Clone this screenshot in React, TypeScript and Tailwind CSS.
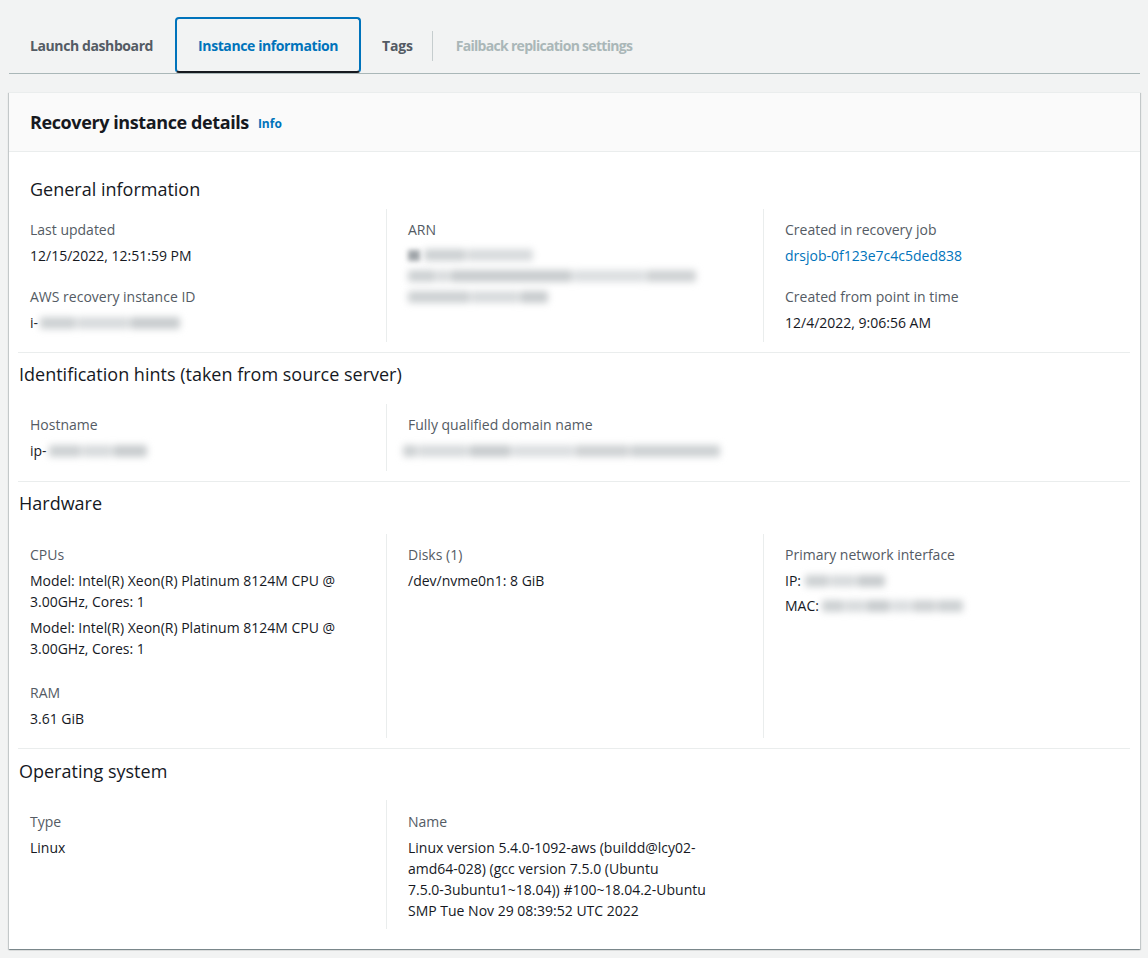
import React from "react";

const Label = ({ children }: { children: React.ReactNode }) => (
  <div className="text-[14px] leading-[20px] text-[#545b64]">{children}</div>
);

const Value = ({
  children,
  className = "mt-[5px]",
  color = "text-[#16191f]",
}: {
  children: React.ReactNode;
  className?: string;
  color?: string;
}) => <div className={"text-[14px] leading-[21px] max-w-[330px] " + color + " " + className}>{children}</div>;

const shades = ["#cdd1d3", "#d8dbdd", "#c8ccce", "#dcdfe1", "#cfd2d4"];

const Blur = ({ segs, className = "" }: { segs: number[]; className?: string }) => (
  <span className={"inline-flex items-center gap-[1px] align-middle blur-[3.5px] " + className}>
    {segs.map((w, i) => (
      <span
        key={i}
        className="inline-block h-[12px] rounded-[2px]"
        style={{ width: w, backgroundColor: shades[i % shades.length] }}
      />
    ))}
  </span>
);

const Heading = ({ children, className = "" }: { children: React.ReactNode; className?: string }) => (
  <h2 className={"text-[18px] leading-[24px] font-normal text-[#16191f] " + className}>{children}</h2>
);

const Sep = ({ className = "" }: { className?: string }) => (
  <div className={"ml-[9px] mr-[10px] h-px bg-[#eaeded] " + className} />
);

export default function App() {
  return (
    <div className="min-h-[958px] bg-[#f2f3f3] pl-[9px] pr-[8px] font-['Open_Sans',sans-serif] text-[#16191f]">
      {/* Tabs */}
      <div className="flex h-[74px] items-stretch border-b border-[#aab7b8] pt-[17px]">
        <div className="flex items-center pl-[21px] pr-[22px] text-[14px] font-bold tracking-[-0.4px] text-[#545b64]">
          Launch dashboard
        </div>
        <div className="flex items-center rounded-[4px] border-2 border-[#0073bb] border-b-[#16191f] px-[21px] text-[14px] font-bold tracking-[-0.4px] text-[#0073bb]">
          Instance information
        </div>
        <div className="flex items-center pl-[21px] pr-[19px] text-[14px] font-bold tracking-[-0.2px] text-[#545b64]">
          Tags
        </div>
        <div className="self-center mb-[-1px] h-[30px] w-px bg-[#c6cdce]" />
        <div className="flex items-center pl-[23px] text-[14px] font-bold tracking-[-0.7px] text-[#aab7b8]">
          Failback replication settings
        </div>
      </div>

      {/* Card */}
      <div className="mt-[18px] border-t border-[#eaeded] bg-white pb-[20px] shadow-[0_1px_1px_0_rgba(0,28,36,0.3),1px_1px_1px_0_rgba(0,28,36,0.15),-1px_1px_1px_0_rgba(0,28,36,0.15)]">
        <div className="flex h-[59px] items-center border-b border-[#eaeded] bg-[#fafafa] pl-[21px]">
          <h1 className="text-[18px] font-bold tracking-[-0.4px] text-[#16191f]">Recovery instance details</h1>
          <span className="ml-[9px] mt-[3px] text-[12px] font-bold text-[#0073bb]">Info</span>
        </div>

        {/* General information */}
        <Heading className="mt-[25px] pl-[21px]">General information</Heading>
        <div className="mt-[8px] grid grid-cols-3">
          <div className="pl-[21px] pr-[20px] pt-[11px] pb-[9px]">
            <Label>Last updated</Label>
            <Value>12/15/2022, 12:51:59 PM</Value>
            <div className="mt-[21px]">
              <Label>AWS recovery instance ID</Label>
              <Value>
                <span className="flex items-center">
                  i-
                  <Blur className="ml-[2px]" segs={[36, 52, 50]} />
                </span>
              </Value>
            </div>
          </div>
          <div className="border-l border-[#eaeded] pl-[21px] pr-[20px] pt-[11px] pb-[9px]">
            <Label>ARN</Label>
            <div className="mt-[5px] flex flex-col gap-[9px] pt-[4px]">
              <span className="flex items-center">
                <span className="inline-block h-[11px] w-[12px] bg-[#9fa4a8] blur-[2.5px]" />
                <Blur className="ml-[4px]" segs={[42, 66]} />
              </span>
              <Blur segs={[28, 12, 122, 72, 50]} />
              <Blur segs={[62, 48, 28]} />
            </div>
          </div>
          <div className="border-l border-[#eaeded] pl-[21px] pr-[20px] pt-[11px] pb-[9px]">
            <Label>Created in recovery job</Label>
            <Value color="text-[#0073bb]">drsjob-0f123e7c4c5ded838</Value>
            <div className="mt-[21px]">
              <Label>Created from point in time</Label>
              <Value>12/4/2022, 9:06:56 AM</Value>
            </div>
          </div>
        </div>
        <Sep className="mt-[10px]" />

        {/* Identification hints */}
        <Heading className="mt-[9px] pl-[10px]">Identification hints (taken from source server)</Heading>
        <div className="mt-[18px] grid grid-cols-3">
          <div className="pl-[21px] pr-[20px] pt-[11px] pb-[10px]">
            <Label>Hostname</Label>
            <Value>
              <span className="flex items-center">
                ip-
                <Blur className="ml-[2px]" segs={[32, 30, 34]} />
              </span>
            </Value>
          </div>
          <div className="border-l border-[#eaeded] pl-[21px] pr-[20px] pt-[11px] pb-[10px]">
            <Label>Fully qualified domain name</Label>
            <Value>
              <span className="flex h-[21px] items-center">
                <Blur className="ml-[-5px]" segs={[14, 50, 42, 62, 54, 90]} />
              </span>
            </Value>
          </div>
        </div>
        <Sep className="mt-[10px]" />

        {/* Hardware */}
        <Heading className="mt-[9px] pl-[10px]">Hardware</Heading>
        <div className="mt-[19px] grid grid-cols-3">
          <div className="pl-[21px] pr-[20px] pt-[11px] pb-[9px]">
            <Label>CPUs</Label>
            <Value>Model: Intel(R) Xeon(R) Platinum 8124M CPU @ 3.00GHz, Cores: 1</Value>
            <Value className="mt-[5px]">Model: Intel(R) Xeon(R) Platinum 8124M CPU @ 3.00GHz, Cores: 1</Value>
            <div className="mt-[24px]">
              <Label>RAM</Label>
              <Value>3.61 GiB</Value>
            </div>
          </div>
          <div className="border-l border-[#eaeded] pl-[21px] pr-[20px] pt-[11px] pb-[9px]">
            <Label>Disks (1)</Label>
            <Value>/dev/nvme0n1: 8 GiB</Value>
          </div>
          <div className="border-l border-[#eaeded] pl-[21px] pr-[20px] pt-[11px] pb-[9px]">
            <Label>Primary network interface</Label>
            <Value>
              <span className="flex items-center">
                IP:
                <Blur className="ml-[4px]" segs={[24, 26, 28]} />
              </span>
            </Value>
            <Value className="mt-[4px]">
              <span className="flex items-center">
                MAC:
                <Blur className="ml-[3px]" segs={[22, 20, 24, 20, 24, 26]} />
              </span>
            </Value>
          </div>
        </div>
        <Sep className="mt-[10px]" />

        {/* Operating system */}
        <Heading className="mt-[10px] pl-[10px]">Operating system</Heading>
        <div className="mt-[17px] grid grid-cols-3">
          <div className="pl-[21px] pr-[20px] pt-[12px] pb-[8px]">
            <Label>Type</Label>
            <Value>Linux</Value>
          </div>
          <div className="border-l border-[#eaeded] pl-[21px] pr-[20px] pt-[12px] pb-[8px]">
            <Label>Name</Label>
            <Value className="mt-[5px]">
              {"Linux version 5.4.0-1092-aws (buildd@lcy02-amd64-028) (gcc version 7.5.0 (Ubuntu 7.5.0-\u20603ubuntu1~18.04)) #100~18.04.2-Ubuntu SMP Tue Nov 29 08:39:52 UTC 2022"}
            </Value>
          </div>
        </div>
      </div>
    </div>
  );
}
